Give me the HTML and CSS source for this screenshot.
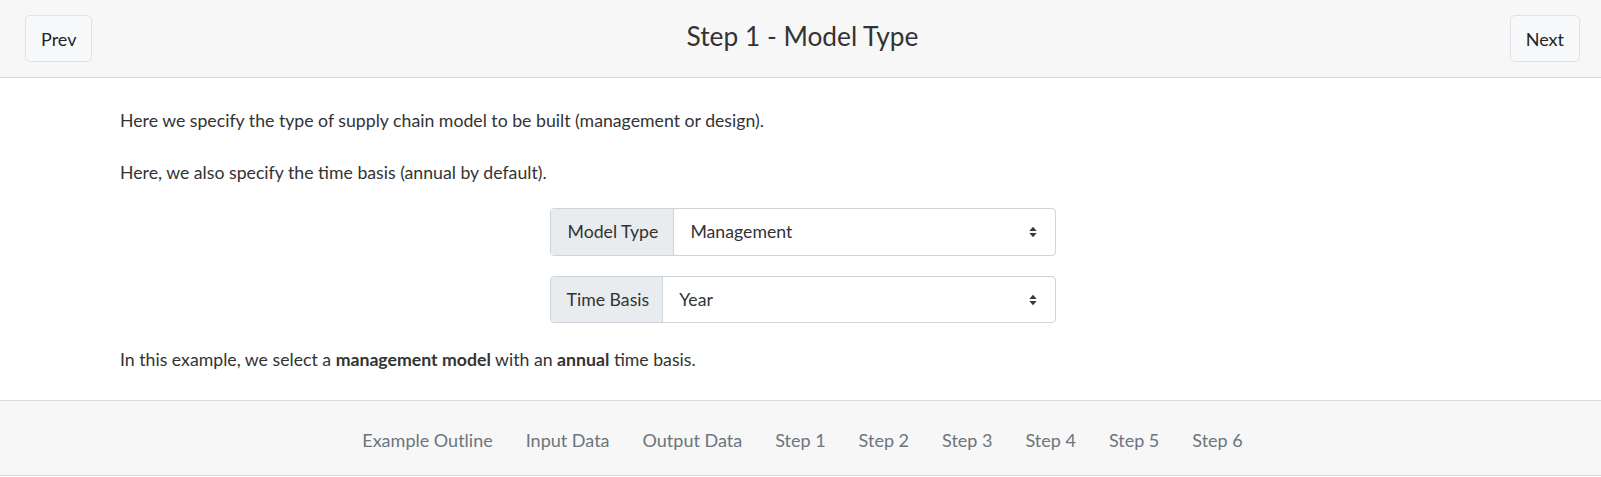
FILE: index.html
```html
<!DOCTYPE html>
<html lang="en">
<head>
<meta charset="utf-8">
<title>Step 1 - Model Type</title>
<link rel="stylesheet" href="styles.css">
</head>
<body>
<header class="topbar">
  <button class="nav-btn prev">Prev</button>
  <h1 class="title">Step 1 - Model Type</h1>
  <button class="nav-btn next">Next</button>
</header>
<main class="content">
  <p class="para p1">Here we specify the type of supply chain model to be built (management or design).</p>
  <p class="para p2">Here, we also specify the time basis (annual by default).</p>
  <div class="input-group g1">
    <span class="addon">Model Type</span>
    <div class="select">
      <span class="value">Management</span>
      <svg class="arrows" width="8" height="12" viewBox="0 0 8 12"><path d="M0.3 5 L4 0.8 L7.7 5 Z M0.3 7 L4 11.2 L7.7 7 Z" fill="#343a40"/></svg>
    </div>
  </div>
  <div class="input-group g2">
    <span class="addon tight">Time Basis</span>
    <div class="select">
      <span class="value">Year</span>
      <svg class="arrows" width="8" height="12" viewBox="0 0 8 12"><path d="M0.3 5 L4 0.8 L7.7 5 Z M0.3 7 L4 11.2 L7.7 7 Z" fill="#343a40"/></svg>
    </div>
  </div>
  <p class="para p3">In this example, we select a <b>management model</b> with an <b>annual</b> time basis.</p>
</main>
<footer class="footbar">
  <nav class="links">
    <a>Example Outline</a>
    <a>Input Data</a>
    <a>Output Data</a>
    <a>Step 1</a>
    <a>Step 2</a>
    <a>Step 3</a>
    <a>Step 4</a>
    <a>Step 5</a>
    <a>Step 6</a>
  </nav>
</footer>
</body>
</html>
```

FILE: styles.css
```css
* { box-sizing: border-box; }
html, body { margin: 0; padding: 0; background: #fff; }
body {
  font-family: Lato, "Noto Sans", sans-serif;
  color: #333;
  font-size: 17.7px;
  line-height: 24px;
}
.topbar {
  height: 78px;
  background: #f7f7f7;
  border-bottom: 1px solid #dadada;
  display: grid;
  grid-template-columns: 1fr auto 1fr;
  align-items: center;
  padding: 0 21px 0 25px;
}
.nav-btn {
  font-family: inherit;
  font-size: 18px;
  color: #212529;
  background: #f8f9fa;
  border: 1px solid #dee2e6;
  border-radius: 5px;
  height: 47px;
  padding: 0 15px;
  margin-top: 0;
}
.prev { justify-self: start; }
.next { justify-self: end; }
.title {
  margin: 0;
  font-weight: 400;
  font-size: 26.3px;
  color: #333;
  margin-top: -5px;
}
.content {
  padding: 31px 116px 0 120px;
  display: flex;
  flex-direction: column;
}
.para { margin: 0; }
.p2 { margin-top: 28px; }
.input-group {
  width: 506px;
  align-self: center;
  display: flex;
  border: 1px solid #ced4da;
  border-radius: 4px;
  overflow: hidden;
}
.g1 { margin-top: 23px; height: 48px; }
.g2 { margin-top: 20px; height: 47px; }
.addon {
  background: #e9ecef;
  border-right: 1px solid #ced4da;
  padding: 0 15px 0 17px;
  display: flex;
  align-items: center;
  color: #333;
}
.addon.tight { padding: 0 13px 0 16px; }
.select {
  flex: 1;
  display: flex;
  align-items: center;
  justify-content: space-between;
  padding: 0 18px 0 16px;
  color: #333;
}
.arrows { display: block; }
.p3 { margin-top: 25px; }
.footbar {
  margin-top: 28px;
  height: 76px;
  background: #f7f7f7;
  border-top: 1px solid #dadada;
  border-bottom: 1px solid #dadada;
  display: flex;
  justify-content: center;
  align-items: center;
  padding: 4px 0 0 4px;
}
.links { display: flex; gap: 33px; }
.links a { color: #6c757d; font-size: 18px; }
```
